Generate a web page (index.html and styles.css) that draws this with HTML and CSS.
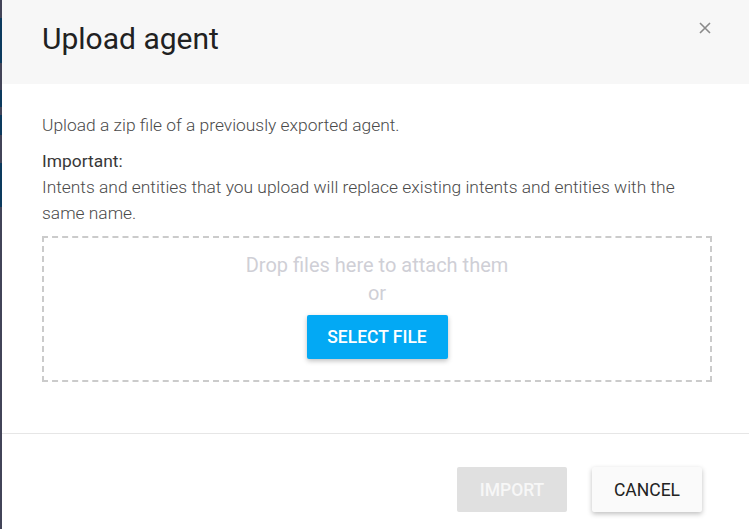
FILE: index.html
```html
<!DOCTYPE html>
<html>
<head>
<meta charset="utf-8">
<link rel="stylesheet" href="styles.css">
</head>
<body>
<div class="page">
  <div class="backdrop">
    <span class="seg g" style="height:18px"></span>
    <span class="seg n" style="height:45px"></span>
    <span class="seg g" style="height:27px"></span>
    <span class="seg n" style="height:17px"></span>
    <span class="seg g" style="height:8px"></span>
    <span class="seg n" style="height:20px"></span>
    <span class="seg g" style="height:28px"></span>
    <span class="seg n" style="height:44px"></span>
    <span class="seg g rest"></span>
  </div>
  <div class="dialog">
    <header class="head">
      <h1 class="title">Upload agent</h1>
      <button class="close" aria-label="close">
        <svg width="12" height="12" viewBox="0 0 12 12"><path d="M1 1L11 11M11 1L1 11" stroke="#8a8a8a" stroke-width="1.6"/></svg>
      </button>
    </header>
    <section class="body">
      <p class="lead">Upload a zip file of a previously exported agent.</p>
      <p class="important">Important:</p>
      <p class="note">Intents and entities that you upload will replace existing intents and entities with the same name.</p>
      <div class="drop">
        <div class="drop-text">Drop files here to attach them</div>
        <div class="drop-or">or</div>
        <button class="btn primary">SELECT FILE</button>
      </div>
    </section>
    <footer class="foot">
      <button class="btn disabled">IMPORT</button>
      <button class="btn light">CANCEL</button>
    </footer>
  </div>
</div>
</body>
</html>
```
FILE: styles.css
```css
* { box-sizing: border-box; }
html, body { margin: 0; padding: 0; }
body {
  width: 749px;
  height: 529px;
  overflow: hidden;
  background: #fff;
  font-family: Roboto, "Liberation Sans", sans-serif;
}
.page {
  display: flex;
  height: 529px;
}
.backdrop {
  width: 2px;
  display: flex;
  flex-direction: column;
  flex-shrink: 0;
}
.seg { display: block; width: 2px; }
.seg.g { background: #424458; }
.seg.n { background: #0c3a5e; }
.seg.rest { flex: 1; }
.dialog {
  flex: 1;
  display: flex;
  flex-direction: column;
  background: #fff;
}
.head {
  height: 84px;
  background: #f7f7f7;
  display: flex;
  justify-content: space-between;
  align-items: flex-start;
  padding: 0 38px 0 40px;
}
.title {
  margin: 0;
  font-weight: 400;
  font-size: 30px;
  line-height: 30px;
  color: #212121;
  padding-top: 24px;
}
.close {
  border: 0;
  background: none;
  padding: 0;
  margin-top: 22px;
  width: 12px;
  height: 12px;
  cursor: pointer;
}
.close svg { display: block; }
.body {
  padding: 28px 37px 0 40px;
  height: 350px;
  border-bottom: 1px solid #e6e6e6;
}
.body p {
  margin: 0;
  font-size: 17.4px;
  line-height: 26px;
}
.lead {
  font-weight: 300;
  color: #4a4a4a;
  margin-bottom: 10px !important;
}
.important { color: #383838; font-weight: 400; }
.note { font-weight: 300; color: #4a4a4a; }
.drop {
  margin-top: 10px;
  height: 146px;
  border: 2px dashed #cbcbcb;
  display: flex;
  flex-direction: column;
  align-items: center;
  padding-top: 14px;
}
.drop-text, .drop-or {
  font-size: 20px;
  line-height: 26px;
  color: #cfcfd6;
}
.drop-or { line-height: 30px; }
.btn {
  border: 0;
  border-radius: 2px;
  font-family: Roboto, "Liberation Sans", sans-serif;
  font-size: 17.5px;
  height: 44px;
  cursor: pointer;
}
.primary {
  margin-top: 7px;
  width: 141px;
  background: #03a9f4;
  color: #fff;
  font-weight: 500;
  box-shadow: 0 2px 5px rgba(0,0,0,0.25);
}
.foot {
  flex: 1;
  display: flex;
  justify-content: flex-end;
  align-items: flex-start;
  gap: 25px;
  padding: 33px 47px 0 0;
}
.foot .btn { width: 110px; height: 45px; font-weight: 400; }
.disabled { background: #e0e0e0; color: #f7f7f7; font-weight: 500 !important; }
.light {
  background: #fafafa;
  color: #222;
  box-shadow: 0 2px 5px rgba(0,0,0,0.25);
}
```
